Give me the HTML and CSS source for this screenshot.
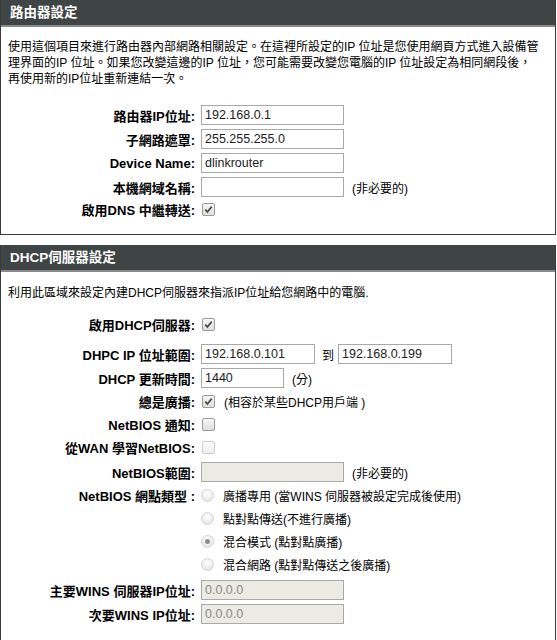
FILE: index.html
```html
<!DOCTYPE html>
<html lang="zh-Hant">
<head>
<meta charset="utf-8">
<title>路由器設定</title>
<link rel="stylesheet" href="styles.css">
</head>
<body>
<section class="box">
  <h2 class="box-title">路由器設定</h2>
  <div class="box-body body-router">
    <p class="desc">使用這個項目來進行路由器內部網路相關設定。在這裡所設定的IP 位址是您使用網頁方式進入設備管<br>理界面的IP 位址。如果您改變這邊的IP 位址，您可能需要改變您電腦的IP 位址設定為相同網段後，<br>再使用新的IP位址重新連結一次。</p>
    <div class="form form-router">
      <div class="row row-in"><span class="lbl">路由器IP位址:</span><div class="field"><input class="txt" type="text" value="192.168.0.1"></div></div>
      <div class="row row-in"><span class="lbl">子網路遮罩:</span><div class="field"><input class="txt" type="text" value="255.255.255.0"></div></div>
      <div class="row row-in"><span class="lbl">Device Name:</span><div class="field"><input class="txt" type="text" value="dlinkrouter"></div></div>
      <div class="row row-in"><span class="lbl">本機網域名稱:</span><div class="field"><input class="txt" type="text" value=""><span class="note">(非必要的)</span></div></div>
      <div class="row row-cb-short"><span class="lbl">啟用DNS 中繼轉送:</span><div class="field"><span class="cb"><svg viewBox="0 0 11 11" width="11" height="11"><path d="M2.2 5.6 L4.4 7.9 L8.8 2.6" fill="none" stroke="#4b4b4b" stroke-width="1.7"/></svg></span></div></div>
    </div>
  </div>
</section>

<section class="box">
  <h2 class="box-title">DHCP伺服器設定</h2>
  <div class="box-body body-dhcp">
    <p class="desc">利用此區域來設定內建DHCP伺服器來指派IP位址給您網路中的電腦.</p>
    <div class="form form-dhcp">
      <div class="row"><span class="lbl">啟用DHCP伺服器:</span><div class="field"><span class="cb"><svg viewBox="0 0 11 11" width="11" height="11"><path d="M2.2 5.6 L4.4 7.9 L8.8 2.6" fill="none" stroke="#4b4b4b" stroke-width="1.7"/></svg></span></div></div>
      <div class="row row-in gap-range"><span class="lbl">DHPC IP 位址範圍:</span><div class="field"><input class="txt w-range" type="text" value="192.168.0.101"><span class="to">到</span><input class="txt w-range" type="text" value="192.168.0.199"></div></div>
      <div class="row row-in"><span class="lbl">DHCP 更新時間:</span><div class="field"><input class="txt w-lease" type="text" value="1440"><span class="note">(分)</span></div></div>
      <div class="row"><span class="lbl">總是廣播:</span><div class="field"><span class="cb"><svg viewBox="0 0 11 11" width="11" height="11"><path d="M2.2 5.6 L4.4 7.9 L8.8 2.6" fill="none" stroke="#4b4b4b" stroke-width="1.7"/></svg></span><span class="opt">(相容於某些DHCP用戶端 )</span></div></div>
      <div class="row"><span class="lbl">NetBIOS 通知:</span><div class="field"><span class="cb"></span></div></div>
      <div class="row"><span class="lbl">從WAN 學習NetBIOS:</span><div class="field"><span class="cb cb-disabled"></span></div></div>
      <div class="row row-in gap-1"><span class="lbl">NetBIOS範圍:</span><div class="field"><input class="txt" type="text" value="" disabled><span class="note">(非必要的)</span></div></div>
      <div class="row"><span class="lbl">NetBIOS 網點類型 :</span><div class="field"><span class="rd"></span><span class="opt">廣播專用 (當WINS 伺服器被設定完成後使用)</span></div></div>
      <div class="row"><span class="lbl"></span><div class="field"><span class="rd"></span><span class="opt">點對點傳送(不進行廣播)</span></div></div>
      <div class="row"><span class="lbl"></span><div class="field"><span class="rd rd-on"></span><span class="opt">混合模式 (點對點廣播)</span></div></div>
      <div class="row"><span class="lbl"></span><div class="field"><span class="rd"></span><span class="opt">混合網路 (點對點傳送之後廣播)</span></div></div>
      <div class="row row-in gap-3"><span class="lbl">主要WINS 伺服器IP位址:</span><div class="field"><input class="txt" type="text" value="0.0.0.0" disabled></div></div>
      <div class="row row-in"><span class="lbl">次要WINS IP位址:</span><div class="field"><input class="txt" type="text" value="0.0.0.0" disabled></div></div>
    </div>
  </div>
</section>
</body>
</html>
```
FILE: styles.css
```css
* { box-sizing: border-box; }

html, body {
  margin: 0;
  padding: 0;
  background: #fff;
}

body {
  width: 557px;
  font-family: "Liberation Sans", Arial, "Noto Sans CJK TC", sans-serif;
  font-size: 12px;
  color: #000;
}

.box {
  width: 556px;
  border: 1px solid #3a3a3a;
  border-top: 0;
  background: #fff;
}

.box + .box {
  margin-top: 10px;
}

.box-title {
  margin: 0;
  height: 27px;
  line-height: 25px;
  padding-left: 9px;
  background: #3f4444;
  border-bottom: 2px solid #8a8a8a;
  color: #fff;
  font-size: 13.5px;
  font-weight: bold;
}

.body-router {
  padding: 12px 0 15px;
}

.body-dhcp {
  padding: 13px 0 20px;
}

.desc {
  margin: 0;
  padding: 0 7px;
  font-size: 12px;
  line-height: 16px;
  white-space: nowrap;
}

.form-router {
  margin-top: 16px;
}

.form-dhcp {
  margin-top: 12px;
}

.row {
  display: flex;
  align-items: center;
  height: 23px;
}

.row-in {
  height: 24px;
}

.row-cb-short {
  height: 20px;
}

.gap-range { margin-top: 6px; }
.gap-1 { margin-top: 1px; }
.gap-3 { margin-top: 2px; }

.lbl {
  flex: none;
  width: 194px;
  text-align: right;
  font-size: 13px;
  font-weight: bold;
  white-space: nowrap;
}

.field {
  display: flex;
  align-items: center;
  margin-left: 6px;
  white-space: nowrap;
}

.txt {
  margin: 0;
  width: 143px;
  height: 20px;
  padding: 0 3px;
  border: 1px solid #a9a9a9;
  border-radius: 0;
  background: #fff;
  color: #222;
  font-family: "Liberation Sans", Arial, sans-serif;
  font-size: 12.5px;
  outline: none;
}

.txt:disabled {
  background: #ebebe4;
  color: #8a8a8a;
}

.w-range { width: 114px; }
.w-lease { width: 83px; }

.to {
  margin: 0 4px 0 7px;
}

.note {
  margin-left: 8px;
}

.opt {
  margin-left: 9px;
}

.cb {
  flex: none;
  display: inline-flex;
  align-items: center;
  justify-content: center;
  width: 13px;
  height: 13px;
  margin-left: 1px;
  border: 1px solid #9c9c9c;
  border-radius: 2px;
  background: linear-gradient(#f7f7f7, #dedede);
}

.cb-disabled {
  border-color: #cfcfcf;
  background: linear-gradient(#fbfbfb, #efefef);
}

.rd {
  flex: none;
  position: relative;
  width: 13px;
  height: 13px;
  border-radius: 50%;
  border: 1px solid #d6d6d6;
  background: radial-gradient(circle at 50% 35%, #ffffff 0%, #f1f1f1 45%, #dcdcdc 100%);
}

.rd-on::after {
  content: "";
  position: absolute;
  left: 3px;
  top: 3px;
  width: 5px;
  height: 5px;
  border-radius: 50%;
  background: #8d8d8d;
}
```
